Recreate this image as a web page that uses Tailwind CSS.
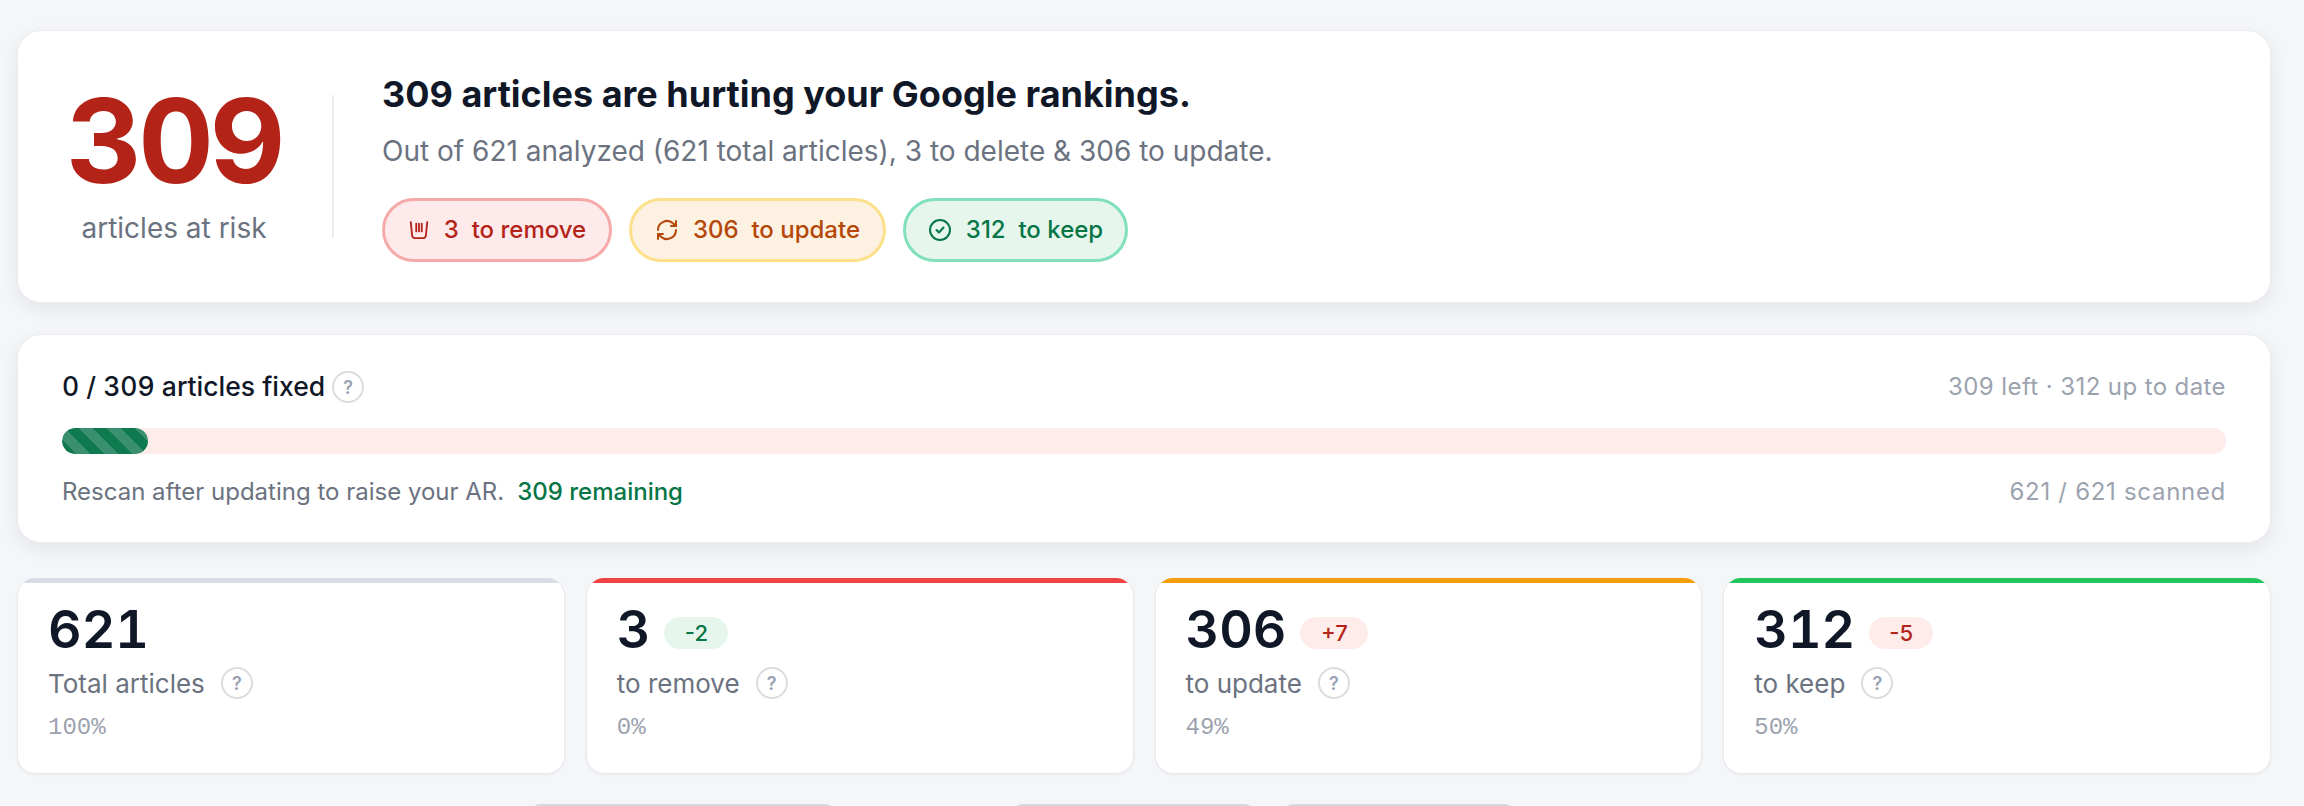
<!doctype html>
<html><head><meta charset="utf-8"><script src="https://cdn.jsdelivr.net/npm/@tailwindcss/browser@4"></script></head>
<body class="m-0">
<div class="h-[806px] overflow-hidden bg-[#f5f6f8] pl-[17px] pr-[33px] pt-[30px] flex flex-col font-['Inter',sans-serif]">
  <section class="h-[273px] shrink-0 rounded-[24px] bg-white border border-[#eceef1] shadow-[0_6px_18px_rgba(17,24,39,0.08)] flex items-center pl-[51px]">
    <div class="w-[210px] flex flex-col items-center pb-[6px]">
      <div class="text-[117px] leading-[117px] font-bold tracking-[-4px] text-[#b42318] tabular-nums">309</div>
      <div class="text-[28px] leading-[36px] mt-[11px] text-[#6b7280] whitespace-nowrap">articles at risk</div>
    </div>
    <div class="w-[2px] h-[143px] bg-[#eceef1] ml-[53px]"></div>
    <div class="ml-[48px] flex flex-col">
      <h1 class="text-[36px] leading-[48px] font-bold text-[#101828] -mt-[2px]">309 articles are hurting your Google rankings.</h1>
      <p class="text-[28px] leading-[36px] text-[#6b7280] mt-[15px]">Out of 621 analyzed (621 total articles), 3 to delete &amp; 306 to update.</p>
      <div class="flex gap-[17px] mt-[29px]">
        <div class="w-[230px] h-[64px] rounded-full border-[3px] border-[#f5a9a9] bg-[#feeaea] text-[#b42318] flex items-center justify-center gap-[14px] text-[24px] font-medium">
          <svg class="w-[22px] h-[22px]" viewBox="0 0 24 24" fill="none" stroke="currentColor" stroke-width="2" stroke-linecap="round" stroke-linejoin="round"><path d="M3 3.500l1.500 14.500a3 3 0 0 0 3 2.800h9a3 3 0 0 0 3-2.800L21 3.500"/><path d="M9 5v8.500M12 5v8.500M15 5v8.500"/></svg>
          <span class="whitespace-pre">3  to remove</span>
        </div>
        <div class="w-[257px] h-[64px] rounded-full border-[3px] border-[#fde08a] bg-[#fdf1e2] text-[#b54708] flex items-center justify-center gap-[14px] text-[24px] font-medium">
          <svg class="w-[24px] h-[24px]" viewBox="0 0 24 24" fill="none" stroke="currentColor" stroke-width="2" stroke-linecap="round" stroke-linejoin="round"><path d="M3 12a9 9 0 0 1 15-6.700L21 8"/><path d="M21 3v5h-5"/><path d="M21 12a9 9 0 0 1-15 6.700L3 16"/><path d="M8 16H3v5"/></svg>
          <span class="whitespace-pre">306  to update</span>
        </div>
        <div class="w-[225px] h-[64px] rounded-full border-[3px] border-[#7fe0bb] bg-[#e6f6ed] text-[#067647] flex items-center justify-center gap-[14px] text-[24px] font-medium">
          <svg class="w-[24px] h-[24px]" viewBox="0 0 24 24" fill="none" stroke="currentColor" stroke-width="2" stroke-linecap="round" stroke-linejoin="round"><circle cx="12" cy="12" r="10"/><path d="m8.500 12 2.500 2.500 4.500-5"/></svg>
          <span class="whitespace-pre">312  to keep</span>
        </div>
      </div>
    </div>
  </section>

  <section class="h-[209px] shrink-0 mt-[31px] rounded-[24px] bg-white border border-[#eceef1] shadow-[0_6px_18px_rgba(17,24,39,0.08)] px-[44px] flex flex-col">
    <div class="flex justify-between items-center mt-[36px] h-[32px]">
      <div class="flex items-center gap-[7px] text-[#101828] text-[26.5px] font-medium tabular-nums">
        <span>0 / 309 articles fixed</span>
        <span class="w-[32px] h-[32px] rounded-full border-[2px] border-[#d9dce1] text-[#98a2b3] text-[18px] font-semibold flex items-center justify-center">?</span>
      </div>
      <div class="text-[24px] text-[#9ca3af] tracking-[0.4px]">309 left · 312 up to date</div>
    </div>
    <div class="h-[26px] mt-[25px] rounded-full bg-[#feecea] overflow-hidden">
      <div class="h-full w-[86px] rounded-full bg-[repeating-linear-gradient(45deg,#0f7a50_0,#0f7a50_10px,#3a8f70_10px,#3a8f70_20px)]"></div>
    </div>
    <div class="flex justify-between items-center mt-[22px] h-[32px] text-[24px]">
      <div class="text-[#6b7280] flex gap-[13px]"><span>Rescan after updating to raise your AR.</span><span class="text-[#067647] font-medium">309 remaining</span></div>
      <div class="text-[#9ca3af] tracking-[0.7px]">621 / 621 scanned</div>
    </div>
  </section>

  <div class="grid grid-cols-4 gap-[21px] mt-[35px] shrink-0">
    <div class="h-[196px] rounded-[18px] overflow-hidden bg-white border border-[#e8eaee] border-t-0 shadow-[0_1px_3px_rgba(17,24,39,0.05)] flex flex-col">
      <div class="h-[5px] bg-[#d9dce6]"></div>
      <div class="pl-[30px] flex flex-col">
        <div class="flex items-center h-[54px] mt-[20px] gap-[14px]"><span class="text-[52px] font-semibold text-[#101828] tabular-nums">621</span></div>
        <div class="flex items-center gap-[16px] mt-[10px] h-[32px] text-[26px] text-[#6b7280]"><span>Total articles</span><span class="w-[32px] h-[32px] rounded-full border-[2px] border-[#d9dce1] text-[#98a2b3] text-[18px] font-semibold flex items-center justify-center">?</span></div>
        <div class="mt-[13px] text-[24px] leading-[32px] font-['Liberation_Mono',monospace] text-[#9ca3af]">100%</div>
      </div>
    </div>
    <div class="h-[196px] rounded-[18px] overflow-hidden bg-white border border-[#e8eaee] border-t-0 shadow-[0_1px_3px_rgba(17,24,39,0.05)] flex flex-col">
      <div class="h-[5px] bg-[#ef4444]"></div>
      <div class="pl-[30px] flex flex-col">
        <div class="flex items-center h-[54px] mt-[20px] gap-[14px]"><span class="text-[52px] font-semibold text-[#101828] tabular-nums">3</span><span class="w-[64px] h-[32px] mt-[6px] rounded-full bg-[#e6f6ed] text-[#067647] text-[22px] font-medium flex items-center justify-center">-2</span></div>
        <div class="flex items-center gap-[16px] mt-[10px] h-[32px] text-[26px] text-[#6b7280]"><span>to remove</span><span class="w-[32px] h-[32px] rounded-full border-[2px] border-[#d9dce1] text-[#98a2b3] text-[18px] font-semibold flex items-center justify-center">?</span></div>
        <div class="mt-[13px] text-[24px] leading-[32px] font-['Liberation_Mono',monospace] text-[#9ca3af]">0%</div>
      </div>
    </div>
    <div class="h-[196px] rounded-[18px] overflow-hidden bg-white border border-[#e8eaee] border-t-0 shadow-[0_1px_3px_rgba(17,24,39,0.05)] flex flex-col">
      <div class="h-[5px] bg-[#f59e0b]"></div>
      <div class="pl-[30px] flex flex-col">
        <div class="flex items-center h-[54px] mt-[20px] gap-[14px]"><span class="text-[52px] font-semibold text-[#101828] tabular-nums">306</span><span class="w-[68px] h-[32px] mt-[6px] rounded-full bg-[#feecea] text-[#b42318] text-[22px] font-medium flex items-center justify-center">+7</span></div>
        <div class="flex items-center gap-[16px] mt-[10px] h-[32px] text-[26px] text-[#6b7280]"><span>to update</span><span class="w-[32px] h-[32px] rounded-full border-[2px] border-[#d9dce1] text-[#98a2b3] text-[18px] font-semibold flex items-center justify-center">?</span></div>
        <div class="mt-[13px] text-[24px] leading-[32px] font-['Liberation_Mono',monospace] text-[#9ca3af]">49%</div>
      </div>
    </div>
    <div class="h-[196px] rounded-[18px] overflow-hidden bg-white border border-[#e8eaee] border-t-0 shadow-[0_1px_3px_rgba(17,24,39,0.05)] flex flex-col">
      <div class="h-[5px] bg-[#22c55e]"></div>
      <div class="pl-[30px] flex flex-col">
        <div class="flex items-center h-[54px] mt-[20px] gap-[14px]"><span class="text-[52px] font-semibold text-[#101828] tabular-nums">312</span><span class="w-[64px] h-[32px] mt-[6px] rounded-full bg-[#feecea] text-[#b42318] text-[22px] font-medium flex items-center justify-center">-5</span></div>
        <div class="flex items-center gap-[16px] mt-[10px] h-[32px] text-[26px] text-[#6b7280]"><span>to keep</span><span class="w-[32px] h-[32px] rounded-full border-[2px] border-[#d9dce1] text-[#98a2b3] text-[18px] font-semibold flex items-center justify-center">?</span></div>
        <div class="mt-[13px] text-[24px] leading-[32px] font-['Liberation_Mono',monospace] text-[#9ca3af]">50%</div>
      </div>
    </div>
  </div>

  <div class="flex mt-[30px] ml-[512px] shrink-0">
    <div class="w-[308px] h-[40px] rounded-[12px] border-[2px] border-[#d5d8de] bg-white"></div>
    <div class="w-[245px] h-[40px] rounded-[12px] border-[2px] border-[#d5d8de] bg-white ml-[174px]"></div>
    <div class="w-[234px] h-[40px] rounded-[12px] border-[2px] border-[#d5d8de] bg-white ml-[26px]"></div>
  </div>
</div>
</body></html>
